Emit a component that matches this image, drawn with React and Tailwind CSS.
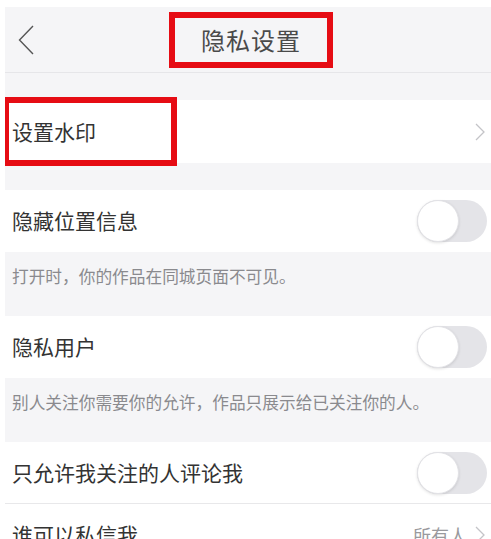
import React from "react";

const font = { fontFamily: '"Noto Sans CJK SC", "Noto Sans", sans-serif' };

const Toggle = () => (
  <div className="w-[70px] h-[42px] rounded-full bg-[#e4e4e8] flex items-center">
    <div className="w-[42px] h-[42px] rounded-full bg-white border border-[#e2e2e6] shadow-[0_1px_3px_rgba(0,0,0,0.12)]" />
  </div>
);

const Chevron = ({ className = "" }) => (
  <svg width="10" height="18" viewBox="0 0 10 18" className={className}>
    <path d="M1 1 L9 9 L1 17" fill="none" stroke="#c4c4c8" strokeWidth="1.3" />
  </svg>
);

const Row = ({ label, right, h = "h-[62px]", border = false, children }) => (
  <div
    className={`relative ${h} bg-white flex items-center justify-between pl-[7px] pr-[4px] ${
      border ? "border-b border-[#e8e8ea]" : ""
    }`}
  >
    <span className="text-[21px] text-[#333]">{label}</span>
    {right}
    {children}
  </div>
);

const Desc = ({ text }) => (
  <div className="h-[64px] pl-[7px] pt-[12px] text-[16.7px] leading-[24px] text-[#8a8a8e]">
    {text}
  </div>
);

export default function App() {
  return (
    <div
      className="w-[491px] h-[539px] overflow-hidden bg-white pt-[7px] pl-[5px]"
      style={font}
    >
      <div className="bg-[#f5f5f7] h-full">
        {/* Header */}
        <div className="h-[66px] border-b border-[#e6e6e9] grid grid-cols-[1fr_auto_1fr] items-center">
          <div className="pl-[13px]">
            <svg width="16" height="30" viewBox="0 0 16 30">
              <path d="M15 1 L1.5 15 L15 29" fill="none" stroke="#555" strokeWidth="1.4" />
            </svg>
          </div>
          <div className="ml-[6px] w-[164px] h-[56px] border-[6px] border-[#e60c14] flex items-center justify-center">
            <span className="text-[24px] text-[#4a4a4a] tracking-[1px]">隐私设置</span>
          </div>
          <div />
        </div>

        <div className="h-[27px]" />

        <Row label="设置水印" h="h-[63px]" right={<Chevron className="mr-[2px]" />}>
          <div className="absolute -top-[3px] left-0 w-[172px] h-[69px] border-[6px] border-l-[4px] border-[#e60c14]" />
        </Row>

        <div className="h-[27px]" />

        <Row label="隐藏位置信息" right={<Toggle />} />
        <Desc text="打开时，你的作品在同城页面不可见。" />

        <Row label="隐私用户" right={<Toggle />} />
        <Desc text="别人关注你需要你的允许，作品只展示给已关注你的人。" />

        <Row label="只允许我关注的人评论我" right={<Toggle />} border />
        <Row
          label="谁可以私信我"
          right={
            <div className="flex items-center gap-[8px] mr-[2px]">
              <span className="text-[18px] text-[#9a9a9e]">所有人</span>
              <Chevron />
            </div>
          }
        />
      </div>
    </div>
  );
}
